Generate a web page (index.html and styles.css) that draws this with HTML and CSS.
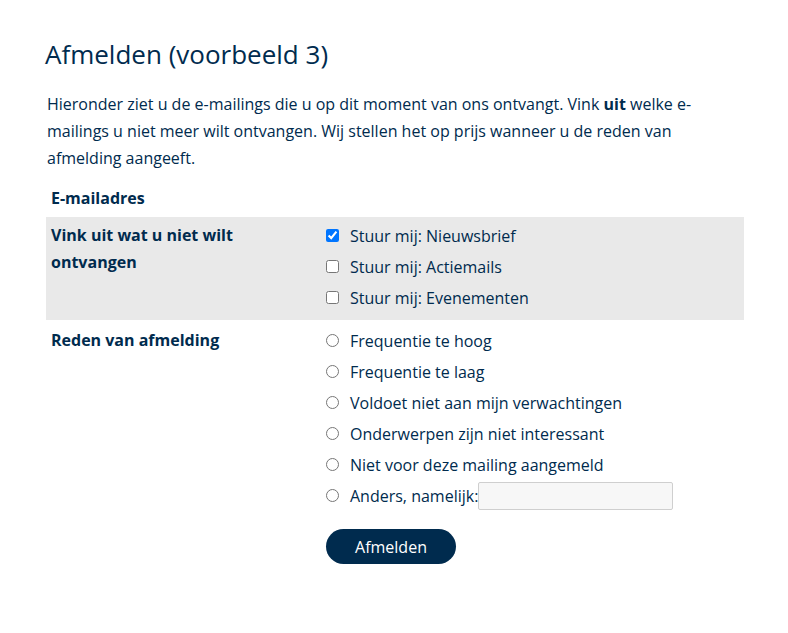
FILE: index.html
```html
<!DOCTYPE html>
<html lang="nl">
<head>
<meta charset="utf-8">
<title>Afmelden (voorbeeld 3)</title>
<link rel="stylesheet" href="styles.css">
</head>
<body>
<main class="page">
  <h1 class="title">Afmelden (voorbeeld 3)</h1>
  <p class="intro">Hieronder ziet u de e-mailings die u op dit moment van ons ontvangt. Vink <strong>uit</strong> welke e-mailings u niet meer wilt ontvangen. Wij stellen het op prijs wanneer u de reden van afmelding aangeeft.</p>
  <form class="form">
    <div class="row">
      <div class="label">E-mailadres</div>
      <div class="field"></div>
    </div>
    <div class="row shaded">
      <div class="label">Vink uit wat u niet wilt ontvangen</div>
      <div class="field">
        <label class="option"><input type="checkbox" checked><span>Stuur mij: Nieuwsbrief</span></label>
        <label class="option"><input type="checkbox"><span>Stuur mij: Actiemails</span></label>
        <label class="option"><input type="checkbox"><span>Stuur mij: Evenementen</span></label>
      </div>
    </div>
    <div class="row">
      <div class="label">Reden van afmelding</div>
      <div class="field">
        <label class="option"><input type="radio" name="reden"><span>Frequentie te hoog</span></label>
        <label class="option"><input type="radio" name="reden"><span>Frequentie te laag</span></label>
        <label class="option"><input type="radio" name="reden"><span>Voldoet niet aan mijn verwachtingen</span></label>
        <label class="option"><input type="radio" name="reden"><span>Onderwerpen zijn niet interessant</span></label>
        <label class="option"><input type="radio" name="reden"><span>Niet voor deze mailing aangemeld</span></label>
        <label class="option"><input type="radio" name="reden"><span>Anders, namelijk:</span><input type="text" class="other"></label>
        <div class="actions"><button type="button" class="submit">Afmelden</button></div>
      </div>
    </div>
  </form>
</main>
</body>
</html>
```
FILE: styles.css
```css
html, body {
  margin: 0;
  padding: 0;
  background: #ffffff;
}
body {
  font-family: "Open Sans", "Liberation Sans", sans-serif;
  color: #002b4e;
  font-size: 16px;
}
.page {
  width: 698px;
  margin-left: 46px;
  padding-top: 36px;
}
.title {
  font-size: 26px;
  font-weight: 400;
  line-height: 36px;
  margin: 0 0 0 -1px;
}
.intro {
  margin: 19px 0 0 1px;
  line-height: 27px;
}
.intro strong {
  font-weight: 700;
}
.form {
  margin-top: 8px;
}
.row {
  display: flex;
  padding: 5px 0;
}
.row.shaded {
  background: #e9e9e9;
  padding: 5px 0 7px;
  margin-bottom: 2px;
}
.label {
  box-sizing: border-box;
  width: 277px;
  padding: 0 20px 0 5px;
  font-weight: 700;
  line-height: 27px;
}
.field {
  display: flex;
  flex-direction: column;
  padding-left: 3px;
  margin-top: -2px;
}
.option {
  display: flex;
  align-items: center;
  height: 31px;
}
.option input[type="checkbox"],
.option input[type="radio"] {
  width: 13px;
  height: 13px;
  margin: 0 11px 0 0;
}
.other {
  box-sizing: border-box;
  width: 195px;
  height: 28px;
  margin: 0;
  border: 1px solid #cfcfcf;
  border-radius: 2px;
  background: #f7f7f7;
  font: inherit;
}
.actions {
  margin-top: 18px;
}
.submit {
  width: 130px;
  height: 35px;
  border: none;
  border-radius: 18px;
  background: #002b4e;
  color: #ffffff;
  font-family: "Open Sans", "Liberation Sans", sans-serif;
  font-size: 16px;
  padding: 0;
  cursor: pointer;
}
```
